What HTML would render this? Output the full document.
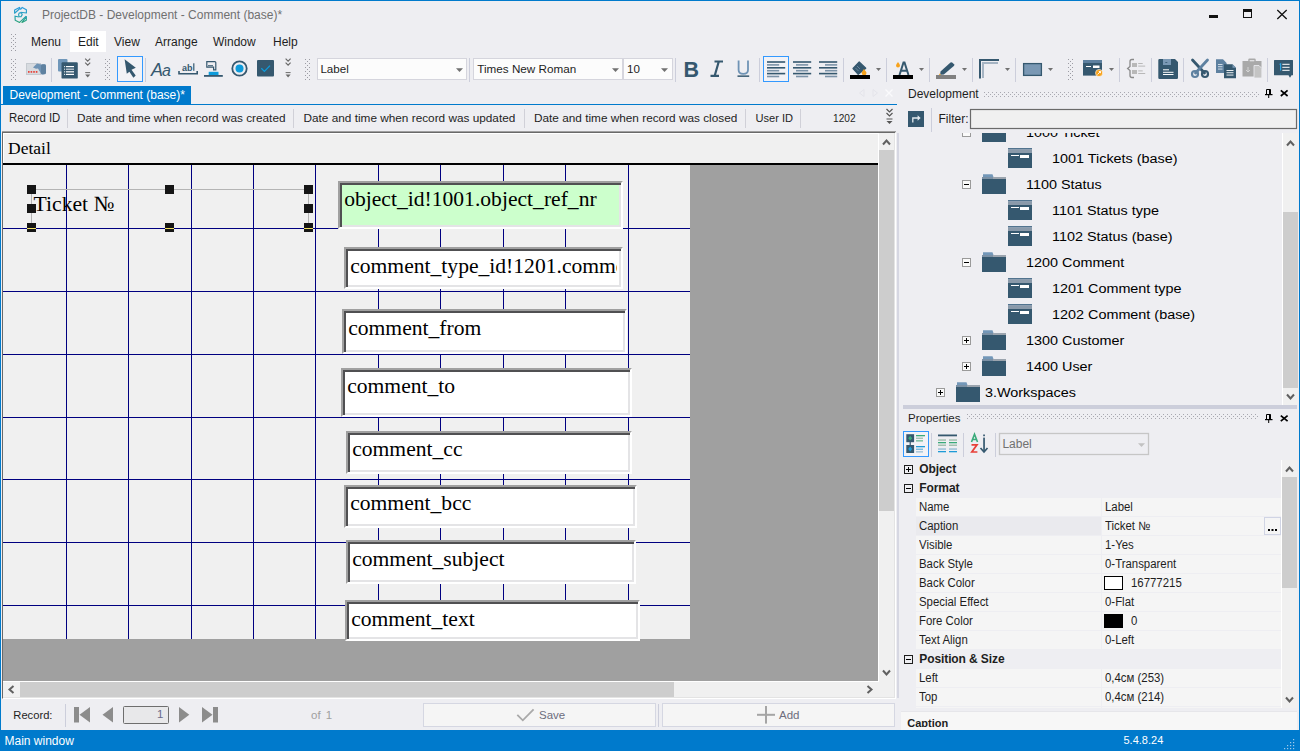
<!DOCTYPE html>
<html><head><meta charset="utf-8">
<style>
*{margin:0;padding:0;box-sizing:border-box}
html,body{width:1300px;height:751px;overflow:hidden;background:#EEEEF2;font-family:"Liberation Sans",sans-serif;font-size:12px;color:#1E1E1E}
.a{position:absolute}
.t{position:absolute;white-space:nowrap;line-height:1}
.s{font-family:"Liberation Serif",serif;color:#000}
.sep{position:absolute;width:1px;background:#CCCEDB}
.grip{position:absolute;width:6px;background-image:radial-gradient(circle at 1px 1px,#9A9AA2 0.8px,transparent 1px),radial-gradient(circle at 1px 1px,#9A9AA2 0.8px,transparent 1px);background-size:4px 4px,4px 4px;background-position:0 0,2px 2px}
.tb{position:absolute;background:#fff;border-style:solid;border-width:2px;border-color:#A0A0A0 #FFFFFF #FFFFFF #A0A0A0;box-shadow:inset 2px 2px 0 #505052,inset -2px -2px 0 #E4E4E6}
.tbt{position:absolute;font-family:"Liberation Serif",serif;font-size:21.6px;line-height:1;white-space:nowrap;color:#000;overflow:hidden}
.gl{position:absolute;background:#000080}
.h{position:absolute;width:9px;height:9px;background:#151515}
.row{position:absolute;left:916px;width:365px;height:18px;background:#F5F5F5}
.pl{position:absolute;left:919px;font-size:11px;line-height:1;white-space:nowrap;color:#1E1E1E}
.pv{position:absolute;left:1105px;font-size:11px;line-height:1;white-space:nowrap;color:#1E1E1E}
.tr{position:absolute;font-size:12.3px;line-height:1;white-space:nowrap;color:#000;transform:scaleX(1.17);transform-origin:0 0}
</style></head><body>

<!-- window border -->
<div class="a" style="left:0;top:0;width:1300px;height:1px;background:#007ACC"></div>
<div class="a" style="left:0;top:0;width:1px;height:751px;background:#007ACC"></div>
<div class="a" style="left:1299px;top:0;width:1px;height:751px;background:#007ACC"></div>

<!-- title bar -->
<svg class="a" style="left:0;top:0" width="40" height="30" viewBox="0 0 40 30">
<defs><linearGradient id="lg" x1="0" y1="7" x2="0" y2="23" gradientUnits="userSpaceOnUse"><stop offset="0" stop-color="#2A9BE0"/><stop offset="0.55" stop-color="#27A2B8"/><stop offset="1" stop-color="#2BA273"/></linearGradient></defs>
<g fill="none" stroke="url(#lg)" stroke-width="1.15" stroke-linejoin="round">
<path d="M14.6 10 L19.4 7.4 L20.2 8.3 L14.6 13.2 Z"/>
<path d="M20.4 9.6 L22.2 7.4 L26.4 9.8 V13 L20.6 12.2"/>
<path d="M19.2 13 L21.4 12.6 L22.2 14.6 L21 16.8 L19 16.6 L18.6 14.6 Z"/>
<path d="M14.4 16 L18.8 17 M15 16.4 L15.2 20.2 L19.6 22.4 L26.2 16.2"/>
<path d="M22 22.4 L26.4 16.6 L26.3 20.3 Z"/>
</g></svg>
<div class="t" style="left:42px;top:8.6px;color:#707070">ProjectDB - Development - Comment (base)*</div>
<div class="a" style="left:1209px;top:15px;width:9px;height:3px;background:#111"></div>
<div class="a" style="left:1243px;top:9px;width:9px;height:9px;border:1px solid #111;border-top-width:3px"></div>
<svg class="a" style="left:1276px;top:9px" width="12" height="11" viewBox="0 0 12 11"><path d="M1.3 1 L10.7 10 M10.7 1 L1.3 10" stroke="#111" stroke-width="1.3"/></svg>

<!-- menu bar -->
<div class="a" style="left:70px;top:31px;width:36px;height:21px;background:#fff"></div>
<div class="t" style="left:31px;top:36.2px">Menu</div>
<div class="t" style="left:78px;top:36.2px">Edit</div>
<div class="t" style="left:114px;top:36.2px">View</div>
<div class="t" style="left:155px;top:36.2px">Arrange</div>
<div class="t" style="left:213px;top:36.2px">Window</div>
<div class="t" style="left:273px;top:36.2px">Help</div>

<!-- TOOLBAR placeholder -->
<!--TB-->
<svg class="a" style="left:0;top:0" width="1300" height="86" viewBox="0 0 1300 86">
<g fill="#9C9CA4"><rect x="11" y="34" width="1" height="1"/><rect x="15" y="34" width="1" height="1"/><rect x="13" y="36" width="1" height="1"/><rect x="11" y="38" width="1" height="1"/><rect x="15" y="38" width="1" height="1"/><rect x="13" y="40" width="1" height="1"/><rect x="11" y="42" width="1" height="1"/><rect x="15" y="42" width="1" height="1"/><rect x="13" y="44" width="1" height="1"/><rect x="11" y="46" width="1" height="1"/><rect x="15" y="46" width="1" height="1"/><rect x="13" y="48" width="1" height="1"/><rect x="11" y="50" width="1" height="1"/><rect x="15" y="50" width="1" height="1"/></g>
<g fill="#9C9CA4"><rect x="11" y="59" width="1" height="1"/><rect x="15" y="59" width="1" height="1"/><rect x="13" y="61" width="1" height="1"/><rect x="11" y="63" width="1" height="1"/><rect x="15" y="63" width="1" height="1"/><rect x="13" y="65" width="1" height="1"/><rect x="11" y="67" width="1" height="1"/><rect x="15" y="67" width="1" height="1"/><rect x="13" y="69" width="1" height="1"/><rect x="11" y="71" width="1" height="1"/><rect x="15" y="71" width="1" height="1"/><rect x="13" y="73" width="1" height="1"/><rect x="11" y="75" width="1" height="1"/><rect x="15" y="75" width="1" height="1"/><rect x="13" y="77" width="1" height="1"/><rect x="11" y="79" width="1" height="1"/><rect x="15" y="79" width="1" height="1"/></g>
<g fill="#9C9CA4"><rect x="105" y="59" width="1" height="1"/><rect x="109" y="59" width="1" height="1"/><rect x="107" y="61" width="1" height="1"/><rect x="105" y="63" width="1" height="1"/><rect x="109" y="63" width="1" height="1"/><rect x="107" y="65" width="1" height="1"/><rect x="105" y="67" width="1" height="1"/><rect x="109" y="67" width="1" height="1"/><rect x="107" y="69" width="1" height="1"/><rect x="105" y="71" width="1" height="1"/><rect x="109" y="71" width="1" height="1"/><rect x="107" y="73" width="1" height="1"/><rect x="105" y="75" width="1" height="1"/><rect x="109" y="75" width="1" height="1"/><rect x="107" y="77" width="1" height="1"/><rect x="105" y="79" width="1" height="1"/><rect x="109" y="79" width="1" height="1"/></g>
<g fill="#9C9CA4"><rect x="305" y="59" width="1" height="1"/><rect x="309" y="59" width="1" height="1"/><rect x="307" y="61" width="1" height="1"/><rect x="305" y="63" width="1" height="1"/><rect x="309" y="63" width="1" height="1"/><rect x="307" y="65" width="1" height="1"/><rect x="305" y="67" width="1" height="1"/><rect x="309" y="67" width="1" height="1"/><rect x="307" y="69" width="1" height="1"/><rect x="305" y="71" width="1" height="1"/><rect x="309" y="71" width="1" height="1"/><rect x="307" y="73" width="1" height="1"/><rect x="305" y="75" width="1" height="1"/><rect x="309" y="75" width="1" height="1"/><rect x="307" y="77" width="1" height="1"/><rect x="305" y="79" width="1" height="1"/><rect x="309" y="79" width="1" height="1"/></g>
<g fill="#9C9CA4"><rect x="1068" y="59" width="1" height="1"/><rect x="1072" y="59" width="1" height="1"/><rect x="1070" y="61" width="1" height="1"/><rect x="1068" y="63" width="1" height="1"/><rect x="1072" y="63" width="1" height="1"/><rect x="1070" y="65" width="1" height="1"/><rect x="1068" y="67" width="1" height="1"/><rect x="1072" y="67" width="1" height="1"/><rect x="1070" y="69" width="1" height="1"/><rect x="1068" y="71" width="1" height="1"/><rect x="1072" y="71" width="1" height="1"/><rect x="1070" y="73" width="1" height="1"/><rect x="1068" y="75" width="1" height="1"/><rect x="1072" y="75" width="1" height="1"/><rect x="1070" y="77" width="1" height="1"/><rect x="1068" y="79" width="1" height="1"/><rect x="1072" y="79" width="1" height="1"/></g>
<rect x="26.5" y="63.5" width="14" height="11" fill="#D7DBE0" stroke="#C5CAD0" stroke-width="1"/>
<g fill="#E8453C"><rect x="28" y="71" width="1.6" height="1.8"/><rect x="30.6" y="71" width="1.6" height="1.8"/><rect x="33.2" y="71" width="1.6" height="1.8"/><rect x="35.8" y="71" width="1.6" height="1.8"/></g>
<path d="M33 67.5 L37 63.5 L41 64.5 L45.5 64.5 L45.5 72.5 Q45 74.5 43 74.5 L41.5 74.5 L38 68.5 L36 68.8 Z" fill="#6F93B5"/>
<rect x="41" y="64.2" width="5" height="10" rx="1.5" fill="#5E81A0"/>
<rect x="51" y="58" width="1" height="24" fill="#CCCEDB"/>
<rect x="58" y="59" width="9.5" height="12.5" rx="1" fill="#7097BA"/>
<rect x="61.5" y="62.3" width="16.3" height="16.3" rx="1.2" fill="#35586F"/>
<g fill="#fff"><rect x="66" y="66" width="8" height="1.2"/><rect x="66" y="68.6" width="8" height="1.2" fill="#C9D3DC"/><rect x="66" y="71.2" width="8" height="1.2"/><rect x="66" y="73.8" width="8" height="1.2"/><rect x="64.2" y="66" width="0.9" height="1.2"/><rect x="64.2" y="68.6" width="0.9" height="1.2"/><rect x="64.2" y="71.2" width="0.9" height="1.2"/><rect x="64.2" y="73.8" width="0.9" height="1.2"/></g>
<path d="M85.2 58.6 l2.5 2.5 l2.5 -2.5 M85.2 62.6 l2.5 2.5 l2.5 -2.5" fill="none" stroke="#6A6A6A" stroke-width="1.2"/><rect x="85.2" y="72.1" width="5" height="1" fill="#6A6A6A"/><path d="M85.2 74.6 h5 l-2.5 3 z" fill="#6A6A6A"/>
<rect x="117.5" y="56.5" width="25" height="25" fill="#F2F2F6" stroke="#3399FF" stroke-width="1"/>
<path d="M124.6 59.2 L135.8 67.8 L131.5 69.8 L135.7 75.4 L133.4 77.7 L129.4 71.8 L126.8 73.8 Z" fill="#35586F"/>
<rect x="145" y="58" width="1" height="24" fill="#CCCEDB"/>
<text x="151" y="75.5" font-family="Liberation Sans" font-style="italic" font-size="18" fill="#35586F">A</text>
<text x="162" y="75.5" font-family="Liberation Sans" font-style="italic" font-size="16" fill="#35586F" textLength="10">a</text>
<text x="182" y="70.5" font-family="Liberation Sans" font-weight="bold" font-size="9" fill="#35586F">ab</text>
<rect x="193.2" y="63.3" width="1.2" height="7.5" fill="#35586F"/>
<path d="M179 71 V73.8 H197.2 V71" fill="none" stroke="#35586F" stroke-width="1.6"/>
<path d="M206.8 61.6 H214.8 Q215.8 61.6 215.8 62.6 V69.8 H213.6 V67.2 H206.8 Z" fill="none" stroke="#35586F" stroke-width="1.2"/>
<rect x="208" y="65.2" width="5" height="1" fill="#35586F"/>
<rect x="208.7" y="71.8" width="9.8" height="3.4" fill="#0D9BDB"/>
<rect x="204" y="75" width="18.8" height="1.8" fill="#35586F"/>
<circle cx="239.5" cy="68.5" r="7.2" fill="none" stroke="#35586F" stroke-width="1.8"/><circle cx="239.5" cy="68.5" r="4" fill="#0D9BDB"/>
<rect x="257" y="60" width="17" height="16.6" rx="1" fill="#35586F"/><path d="M261.3 68.3 L264.4 71.4 L270 65.6" fill="none" stroke="#0D9BDB" stroke-width="1.3"/>
<path d="M285.6 58.6 l2.5 2.5 l2.5 -2.5 M285.6 62.6 l2.5 2.5 l2.5 -2.5" fill="none" stroke="#6A6A6A" stroke-width="1.2"/><rect x="285.6" y="72.1" width="5" height="1" fill="#6A6A6A"/><path d="M285.6 74.6 h5 l-2.5 3 z" fill="#6A6A6A"/>
<rect x="317.5" y="58.5" width="149" height="21" fill="#FCFCFC" stroke="#D5D5DD"/>
<path d="M456 68.2 h7 l-3.5 3.8 z" fill="#717171"/>
<rect x="469" y="58" width="1" height="24" fill="#CCCEDB"/>
<rect x="473.5" y="58.5" width="149" height="21" fill="#FCFCFC" stroke="#D5D5DD"/>
<path d="M612 68.2 h7 l-3.5 3.8 z" fill="#717171"/>
<rect x="623.5" y="58.5" width="49" height="21" fill="#FCFCFC" stroke="#D5D5DD"/>
<path d="M661 68.2 h7 l-3.5 3.8 z" fill="#717171"/>
<rect x="675" y="58" width="1" height="24" fill="#CCCEDB"/>
<text x="683.5" y="76.6" font-family="Liberation Sans" font-weight="bold" font-size="21.5" fill="#35586F">B</text>
<path d="M714.5 61.5 H723 M710.5 75.8 H719 M718.8 61.5 L714.7 75.8" fill="none" stroke="#35586F" stroke-width="2.2"/>
<path d="M738.6 60.5 V70 Q738.6 73.8 743.3 73.8 Q748 73.8 748 70 V60.5" fill="none" stroke="#6F93B5" stroke-width="1.8"/><rect x="737.5" y="75.4" width="11.7" height="1.5" fill="#35586F"/>
<rect x="759" y="58" width="1" height="24" fill="#CCCEDB"/>
<rect x="763.5" y="56.5" width="25" height="25" fill="#F2F2F6" stroke="#3399FF"/>
<rect x="767" y="61.2" width="18.2" height="1.6" fill="#35586F"/><rect x="767" y="64.1" width="12.2" height="1.6" fill="#7C93A8"/><rect x="767" y="67.0" width="18.2" height="1.6" fill="#35586F"/><rect x="767" y="69.9" width="12.2" height="1.6" fill="#7C93A8"/><rect x="767" y="72.8" width="18.2" height="1.6" fill="#35586F"/><rect x="767" y="75.7" width="12.2" height="1.6" fill="#7C93A8"/>
<rect x="793.0" y="61.2" width="18.2" height="1.6" fill="#35586F"/><rect x="796.0" y="64.1" width="12.2" height="1.6" fill="#7C93A8"/><rect x="793.0" y="67.0" width="18.2" height="1.6" fill="#35586F"/><rect x="796.0" y="69.9" width="12.2" height="1.6" fill="#7C93A8"/><rect x="793.0" y="72.8" width="18.2" height="1.6" fill="#35586F"/><rect x="796.0" y="75.7" width="12.2" height="1.6" fill="#7C93A8"/>
<rect x="819.0" y="61.2" width="18.2" height="1.6" fill="#35586F"/><rect x="825.0" y="64.1" width="12.2" height="1.6" fill="#7C93A8"/><rect x="819.0" y="67.0" width="18.2" height="1.6" fill="#35586F"/><rect x="825.0" y="69.9" width="12.2" height="1.6" fill="#7C93A8"/><rect x="819.0" y="72.8" width="18.2" height="1.6" fill="#35586F"/><rect x="825.0" y="75.7" width="12.2" height="1.6" fill="#7C93A8"/>
<rect x="843" y="58" width="1" height="24" fill="#CCCEDB"/>
<path d="M859.2 62 L865.8 68.2 L858.2 74.4 L853 68.5 Z" fill="#35586F" stroke="#35586F" stroke-width="1.2" stroke-linejoin="round"/>
<path d="M857 66 l3 3 M855.5 68 l3 3" stroke="#7C98B0" stroke-width="0.7"/>
<path d="M864 69 Q866.5 72 866.5 73 A2.3 2.3 0 0 1 861.7 73 Q861.7 72 864 69 Z" fill="#F7A21B"/>
<rect x="850" y="75" width="20" height="4" fill="#000"/>
<path d="M876 68 h5 l-2.5 3 z" fill="#717171"/>
<rect x="886" y="58" width="1" height="24" fill="#CCCEDB"/>
<path d="M899.5 75 L903.5 62.5 H904.5 L908.5 75 M901 70.8 H907" fill="none" stroke="#35586F" stroke-width="2"/>
<path d="M898 62 Q900 64.5 900 65.5 A2 2 0 0 1 896 65.5 Q896 64.5 898 62 Z" fill="#F7A21B"/>
<rect x="893" y="75" width="20" height="4" fill="#000"/>
<path d="M919 68 h5 l-2.5 3 z" fill="#717171"/>
<rect x="929" y="58" width="1" height="24" fill="#CCCEDB"/>
<path d="M940.5 71.5 L950.5 62.5 Q951.5 61.8 952.5 62.8 L954 64.3 Q954.7 65.2 953.8 66 L943.8 74.5 L940.2 74.7 Z" fill="#35586F"/>
<path d="M939.5 73.5 l1.5 1.2 l-2 0.5 z" fill="#F7A21B"/>
<rect x="936" y="75" width="20" height="4" fill="#808080"/>
<path d="M962 68 h5 l-2.5 3 z" fill="#717171"/>
<rect x="972" y="58" width="1" height="24" fill="#CCCEDB"/>
<path d="M980 78.5 V60 H999" fill="none" stroke="#35586F" stroke-width="2"/>
<path d="M983 78 V63 H998" fill="none" stroke="#A5B4C3" stroke-width="2"/>
<path d="M1005 68 h5 l-2.5 3 z" fill="#717171"/>
<rect x="1015" y="58" width="1" height="24" fill="#CCCEDB"/>
<rect x="1023.6" y="63.6" width="17.8" height="11.8" fill="#7A98B4" stroke="#35586F" stroke-width="1.3"/>
<path d="M1048 68 h5 l-2.5 3 z" fill="#717171"/>
<rect x="1083" y="60" width="19" height="3" fill="#5E81A0"/><rect x="1083" y="63" width="19" height="12.6" fill="#35586F"/>
<rect x="1086" y="66" width="5" height="1" fill="#fff"/><rect x="1093" y="65.5" width="6.5" height="2.5" fill="#fff"/>
<circle cx="1099.1" cy="73" r="3.6" fill="#F7A21B" stroke="#fff" stroke-width="0.6"/><path d="M1097.5 74.5 L1100.5 71.5 M1098.8 71.5 H1100.5 V73.2" stroke="#fff" stroke-width="0.9" fill="none"/>
<path d="M1109 68 h5 l-2.5 3 z" fill="#717171"/>
<rect x="1119" y="58" width="1" height="24" fill="#CCCEDB"/>
<path d="M1134 59.5 H1132 Q1130 59.5 1130 61.5 V66.5 L1127.6 68.5 L1130 70.5 V75.5 Q1130 77.5 1132 77.5 H1134" fill="none" stroke="#8A8A8A" stroke-width="1.3"/>
<g fill="#B8B8B8"><rect x="1132" y="63" width="5" height="4"/><rect x="1132" y="70" width="5" height="4"/><rect x="1138.2" y="63" width="4.5" height="1"/><rect x="1138.2" y="65.6" width="7" height="1"/><rect x="1138.2" y="70.4" width="4.5" height="1"/><rect x="1138.2" y="73" width="7" height="1"/></g>
<rect x="1151" y="58" width="1" height="24" fill="#CCCEDB"/>
<path d="M1159.3 59 H1175 L1178 62 V77.8 Q1178 79 1176.8 79 H1159.5 Q1158.3 79 1158.3 77.8 V60.2 Q1158.3 59 1159.5 59 Z" fill="#35586F"/>
<rect x="1163" y="59" width="8" height="6" fill="#7A98B4"/><rect x="1165.3" y="62" width="2" height="0.8" fill="#35586F"/>
<g fill="#fff"><rect x="1163" y="69.3" width="6" height="1"/><rect x="1163" y="71.8" width="10.5" height="1"/><rect x="1163" y="74" width="10.5" height="1"/></g>
<rect x="1183" y="58" width="1" height="24" fill="#CCCEDB"/>
<path d="M1192.5 60 L1204.5 73" stroke="#35586F" stroke-width="2.8" stroke-linecap="round"/>
<path d="M1207.5 60 L1195.5 73" stroke="#5E81A0" stroke-width="2.8" stroke-linecap="round"/>
<circle cx="1195" cy="74" r="3" fill="none" stroke="#5E81A0" stroke-width="2.2"/><circle cx="1205" cy="74" r="3" fill="none" stroke="#35586F" stroke-width="2.2"/>
<path d="M1216 59.3 H1223 L1226.6 63 V73 H1216 Z" fill="#5E81A0"/>
<g fill="#DDE5EC"><rect x="1218" y="64" width="4.5" height="0.9"/><rect x="1218" y="66.3" width="4.5" height="0.9"/><rect x="1218" y="68.6" width="4.5" height="0.9"/></g>
<path d="M1224 64.2 H1232.5 L1236 67.8 V78.3 H1224 Z" fill="#35586F"/><path d="M1232.5 64.2 V67.8 H1236 Z" fill="#7A98B4"/>
<g fill="#fff"><rect x="1226.5" y="70" width="7" height="0.9"/><rect x="1226.5" y="72.3" width="7" height="0.9"/><rect x="1226.5" y="74.6" width="7" height="0.9"/></g>
<path d="M1242.5 61 H1261.5 V76.5 H1242.5 Z" fill="#A9A9A9"/><path d="M1249 61 V59.8 Q1249 59.2 1249.6 59.2 H1254.4 Q1255 59.2 1255 59.8 V61" fill="none" stroke="#A9A9A9" stroke-width="1.5"/><rect x="1249.8" y="60.5" width="4.4" height="1" fill="#D0D0D0"/>
<path d="M1254 65.5 H1259 L1261.8 68.3 V78 H1254 Z" fill="#C4C4C4" stroke="#EEEEF2" stroke-width="0.8"/>
<path d="M1248 67 V72 M1246 70 L1248 72 L1250 70" fill="none" stroke="#D8D8D8" stroke-width="0.9"/>
<rect x="1267" y="58" width="1" height="24" fill="#CCCEDB"/>
<path d="M1274.6 60 H1292.5 Q1293 60 1293 60.6 V74.8 Q1293 75.3 1292.5 75.3 H1291.5 L1290 77.7 L1288.5 75.3 H1274.6 Q1274 75.3 1274 74.8 V60.6 Q1274 60 1274.6 60 Z" fill="#35586F"/>
<path d="M1279.6 64.5 L1280.6 63.8 V70.5" stroke="#2AA7E8" stroke-width="1.2" fill="none"/>
<g fill="#fff"><rect x="1282.3" y="63.8" width="7.3" height="1"/><rect x="1282.3" y="66.8" width="7.3" height="1"/><rect x="1282.3" y="69.8" width="7.3" height="1"/></g>
</svg>
<div class="t" style="left:320.4px;top:63.2px;font-size:11.6px">Label</div>
<div class="t" style="left:477.3px;top:62.8px;font-size:11.7px">Times New Roman</div>
<div class="t" style="left:627px;top:63.2px;font-size:11.6px">10</div>
<!--/TB-->

<!-- doc tab -->
<div class="a" style="left:3px;top:86px;width:188px;height:19px;background:#007ACC"></div>
<div class="t" style="left:9.5px;top:89.4px;color:#fff">Development - Comment (base)*</div>
<div class="a" style="left:1px;top:104px;width:896px;height:1px;background:#007ACC"></div>
<svg class="a" style="left:858px;top:89px" width="36" height="9" viewBox="0 0 36 9"><path d="M6 0.5 L1.5 4 L6 7.5 Z M15 0.5 L19.5 4 L15 7.5 Z" fill="none" stroke="#E4E4EA" stroke-width="1"/><path d="M27.5 0.5 L34.5 7.5 M34.5 0.5 L27.5 7.5" stroke="#FAFAFC" stroke-width="1.3"/></svg>

<!-- record header row -->

<div class="t" style="left:8.5px;top:112.05px;font-size:12px;transform:scaleX(0.95);transform-origin:0 0">Record ID</div>
<div class="sep" style="left:67px;top:109px;height:19px;background:#D0D0D8"></div>
<div class="t" style="left:77px;top:112.6px;font-size:11.8px">Date and time when record was created</div>
<div class="sep" style="left:293px;top:109px;height:19px;background:#D0D0D8"></div>
<div class="t" style="left:303.5px;top:112.6px;font-size:11.8px">Date and time when record was updated</div>
<div class="sep" style="left:524px;top:109px;height:19px;background:#D0D0D8"></div>
<div class="t" style="left:534px;top:112.6px;font-size:11.8px">Date and time when record was closed</div>
<div class="sep" style="left:745px;top:109px;height:19px;background:#D0D0D8"></div>
<div class="t" style="left:755.5px;top:112.6px;font-size:11.1px">User ID</div>
<div class="sep" style="left:800px;top:109px;height:19px;background:#D0D0D8"></div>
<div class="t" style="left:832.5px;top:113px;font-size:11px;transform:scaleX(0.92);transform-origin:0 0">1202</div>
<svg class="a" style="left:886px;top:108px" width="7" height="17" viewBox="0 0 7 17"><path d="M0.5 1 L3.5 4 L6.5 1 M0.5 5 L3.5 8 L6.5 5" fill="none" stroke="#555" stroke-width="1.2"/><path d="M0.5 11 H6.5" stroke="#555" stroke-width="1"/><path d="M0.5 13 H6.5 L3.5 16 Z" fill="#555"/></svg>

<!-- DESIGN placeholder -->
<div class="a" style="left:2px;top:131px;width:894px;height:568px;background:#F0F0F0;border-style:solid;border-width:2px 1px 1px 1px;border-color:#696969 #fff #fff #696969"></div>
<div class="a" style="left:2px;top:131px;width:894px;height:1px;background:#A0A0A0"></div>
<div class="a" style="left:894px;top:133px;width:1px;height:565px;background:#E3E3E3"></div>
<div class="a" style="left:3px;top:697px;width:892px;height:1px;background:#E3E3E3"></div>
<div class="a" style="left:3px;top:133px;width:875px;height:1px;background:#fff"></div>
<div class="a" style="left:3px;top:133px;width:1px;height:30px;background:#fff"></div>
<div class="t s" style="left:8px;top:140px;font-size:17.5px">Detail</div>
<div class="a" style="left:3px;top:163px;width:875px;height:2px;background:#000"></div>
<div class="a" style="left:3px;top:165px;width:875px;height:516px;background:#A0A0A0"></div>
<div class="a" style="left:3px;top:165px;width:687px;height:474px;background:#F0F0F0"></div>
<div class="a" style="left:878px;top:133px;width:1px;height:549px;background:#fff"></div>
<div class="a" style="left:3px;top:681px;width:876px;height:1px;background:#fff"></div>
<div class="gl" style="left:66px;top:165px;width:1px;height:474px"></div>
<div class="gl" style="left:128px;top:165px;width:1px;height:474px"></div>
<div class="gl" style="left:191px;top:165px;width:1px;height:474px"></div>
<div class="gl" style="left:253px;top:165px;width:1px;height:474px"></div>
<div class="gl" style="left:315px;top:165px;width:1px;height:474px"></div>
<div class="gl" style="left:378px;top:165px;width:1px;height:474px"></div>
<div class="gl" style="left:440px;top:165px;width:1px;height:474px"></div>
<div class="gl" style="left:503px;top:165px;width:1px;height:474px"></div>
<div class="gl" style="left:565px;top:165px;width:1px;height:474px"></div>
<div class="gl" style="left:628px;top:165px;width:1px;height:474px"></div>
<div class="gl" style="left:3px;top:228px;width:687px;height:1px"></div>
<div class="gl" style="left:3px;top:291px;width:687px;height:1px"></div>
<div class="gl" style="left:3px;top:354px;width:687px;height:1px"></div>
<div class="gl" style="left:3px;top:417px;width:687px;height:1px"></div>
<div class="gl" style="left:3px;top:479px;width:687px;height:1px"></div>
<div class="gl" style="left:3px;top:542px;width:687px;height:1px"></div>
<div class="gl" style="left:3px;top:605px;width:687px;height:1px"></div>
<div class="a" style="left:31px;top:189px;width:278px;height:40px;border:1px solid #B4B4B4;border-bottom:none"></div>
<div class="t s" style="left:33.5px;top:193.6px;font-size:21.7px">Ticket №</div>
<div class="h" style="left:27px;top:185px"></div>
<div class="h" style="left:27px;top:223px"></div>
<div class="h" style="left:165px;top:185px"></div>
<div class="h" style="left:165px;top:223px"></div>
<div class="h" style="left:304px;top:185px"></div>
<div class="h" style="left:304px;top:223px"></div>
<div class="h" style="left:27px;top:204px"></div>
<div class="h" style="left:304px;top:204px"></div>
<div class="a" style="left:27px;top:228px;width:9px;height:1px;background:#F0E060"></div>
<div class="a" style="left:165px;top:228px;width:9px;height:1px;background:#F0E060"></div>
<div class="a" style="left:304px;top:228px;width:9px;height:1px;background:#F0E060"></div>
<div class="tb" style="left:338px;top:181px;width:285px;height:48px;background:#CCFFCC"></div>
<div class="tbt" style="left:344.2px;top:188.5px;width:272.8px;height:26px">object_id!1001.object_ref_nr</div>
<div class="tb" style="left:344px;top:247px;width:279px;height:42px;background:#fff"></div>
<div class="tbt" style="left:350.2px;top:255.9px;width:266.8px;height:26px">comment_type_id!1201.comment_type_name</div>
<div class="tb" style="left:342px;top:309px;width:285px;height:45px;background:#fff"></div>
<div class="tbt" style="left:348.2px;top:317.5px;width:272.8px;height:26px">comment_from</div>
<div class="tb" style="left:341px;top:368px;width:291px;height:49px;background:#fff"></div>
<div class="tbt" style="left:347.2px;top:376.0px;width:278.8px;height:26px">comment_to</div>
<div class="tb" style="left:346px;top:431px;width:286px;height:43px;background:#fff"></div>
<div class="tbt" style="left:352.2px;top:439.0px;width:273.8px;height:26px">comment_cc</div>
<div class="tb" style="left:344px;top:485px;width:293px;height:43px;background:#fff"></div>
<div class="tbt" style="left:350.2px;top:493.0px;width:280.8px;height:26px">comment_bcc</div>
<div class="tb" style="left:346px;top:540px;width:290px;height:44px;background:#fff"></div>
<div class="tbt" style="left:352.2px;top:548.5px;width:277.8px;height:26px">comment_subject</div>
<div class="tb" style="left:345px;top:600px;width:295px;height:41px;background:#fff"></div>
<div class="tbt" style="left:351.2px;top:608.5px;width:282.8px;height:26px">comment_text</div>
<div class="a" style="left:879px;top:150px;width:15px;height:361px;background:#CDCDCD"></div>
<svg class="a" style="left:882px;top:138px" width="9" height="8" viewBox="0 0 9 8"><path d="M1 6.5 L4.5 2.5 L8 6.5" fill="none" stroke="#606060" stroke-width="2"/></svg>
<svg class="a" style="left:882px;top:669px" width="9" height="8" viewBox="0 0 9 8"><path d="M1 1.5 L4.5 5.5 L8 1.5" fill="none" stroke="#606060" stroke-width="2"/></svg>
<div class="a" style="left:20px;top:682px;width:654px;height:15px;background:#CDCDCD"></div>
<svg class="a" style="left:7px;top:685px" width="8" height="9" viewBox="0 0 8 9"><path d="M6.5 1 L2.5 4.5 L6.5 8" fill="none" stroke="#606060" stroke-width="2"/></svg>
<svg class="a" style="left:866px;top:685px" width="8" height="9" viewBox="0 0 8 9"><path d="M1.5 1 L5.5 4.5 L1.5 8" fill="none" stroke="#606060" stroke-width="2"/></svg>

<!--RP-->
<div class="a" style="left:897px;top:133px;width:2px;height:565px;background:#D6D7E2"></div>
<div class="t" style="left:908px;top:87.6px">Development</div>
<svg class="a" style="left:0;top:0" width="1300" height="751" viewBox="0 0 1300 751">
<g fill="#A8A8B0"><rect x="984" y="92" width="1" height="1"/><rect x="984" y="96" width="1" height="1"/><rect x="986" y="94" width="1" height="1"/><rect x="988" y="92" width="1" height="1"/><rect x="988" y="96" width="1" height="1"/><rect x="990" y="94" width="1" height="1"/><rect x="992" y="92" width="1" height="1"/><rect x="992" y="96" width="1" height="1"/><rect x="994" y="94" width="1" height="1"/><rect x="996" y="92" width="1" height="1"/><rect x="996" y="96" width="1" height="1"/><rect x="998" y="94" width="1" height="1"/><rect x="1000" y="92" width="1" height="1"/><rect x="1000" y="96" width="1" height="1"/><rect x="1002" y="94" width="1" height="1"/><rect x="1004" y="92" width="1" height="1"/><rect x="1004" y="96" width="1" height="1"/><rect x="1006" y="94" width="1" height="1"/><rect x="1008" y="92" width="1" height="1"/><rect x="1008" y="96" width="1" height="1"/><rect x="1010" y="94" width="1" height="1"/><rect x="1012" y="92" width="1" height="1"/><rect x="1012" y="96" width="1" height="1"/><rect x="1014" y="94" width="1" height="1"/><rect x="1016" y="92" width="1" height="1"/><rect x="1016" y="96" width="1" height="1"/><rect x="1018" y="94" width="1" height="1"/><rect x="1020" y="92" width="1" height="1"/><rect x="1020" y="96" width="1" height="1"/><rect x="1022" y="94" width="1" height="1"/><rect x="1024" y="92" width="1" height="1"/><rect x="1024" y="96" width="1" height="1"/><rect x="1026" y="94" width="1" height="1"/><rect x="1028" y="92" width="1" height="1"/><rect x="1028" y="96" width="1" height="1"/><rect x="1030" y="94" width="1" height="1"/><rect x="1032" y="92" width="1" height="1"/><rect x="1032" y="96" width="1" height="1"/><rect x="1034" y="94" width="1" height="1"/><rect x="1036" y="92" width="1" height="1"/><rect x="1036" y="96" width="1" height="1"/><rect x="1038" y="94" width="1" height="1"/><rect x="1040" y="92" width="1" height="1"/><rect x="1040" y="96" width="1" height="1"/><rect x="1042" y="94" width="1" height="1"/><rect x="1044" y="92" width="1" height="1"/><rect x="1044" y="96" width="1" height="1"/><rect x="1046" y="94" width="1" height="1"/><rect x="1048" y="92" width="1" height="1"/><rect x="1048" y="96" width="1" height="1"/><rect x="1050" y="94" width="1" height="1"/><rect x="1052" y="92" width="1" height="1"/><rect x="1052" y="96" width="1" height="1"/><rect x="1054" y="94" width="1" height="1"/><rect x="1056" y="92" width="1" height="1"/><rect x="1056" y="96" width="1" height="1"/><rect x="1058" y="94" width="1" height="1"/><rect x="1060" y="92" width="1" height="1"/><rect x="1060" y="96" width="1" height="1"/><rect x="1062" y="94" width="1" height="1"/><rect x="1064" y="92" width="1" height="1"/><rect x="1064" y="96" width="1" height="1"/><rect x="1066" y="94" width="1" height="1"/><rect x="1068" y="92" width="1" height="1"/><rect x="1068" y="96" width="1" height="1"/><rect x="1070" y="94" width="1" height="1"/><rect x="1072" y="92" width="1" height="1"/><rect x="1072" y="96" width="1" height="1"/><rect x="1074" y="94" width="1" height="1"/><rect x="1076" y="92" width="1" height="1"/><rect x="1076" y="96" width="1" height="1"/><rect x="1078" y="94" width="1" height="1"/><rect x="1080" y="92" width="1" height="1"/><rect x="1080" y="96" width="1" height="1"/><rect x="1082" y="94" width="1" height="1"/><rect x="1084" y="92" width="1" height="1"/><rect x="1084" y="96" width="1" height="1"/><rect x="1086" y="94" width="1" height="1"/><rect x="1088" y="92" width="1" height="1"/><rect x="1088" y="96" width="1" height="1"/><rect x="1090" y="94" width="1" height="1"/><rect x="1092" y="92" width="1" height="1"/><rect x="1092" y="96" width="1" height="1"/><rect x="1094" y="94" width="1" height="1"/><rect x="1096" y="92" width="1" height="1"/><rect x="1096" y="96" width="1" height="1"/><rect x="1098" y="94" width="1" height="1"/><rect x="1100" y="92" width="1" height="1"/><rect x="1100" y="96" width="1" height="1"/><rect x="1102" y="94" width="1" height="1"/><rect x="1104" y="92" width="1" height="1"/><rect x="1104" y="96" width="1" height="1"/><rect x="1106" y="94" width="1" height="1"/><rect x="1108" y="92" width="1" height="1"/><rect x="1108" y="96" width="1" height="1"/><rect x="1110" y="94" width="1" height="1"/><rect x="1112" y="92" width="1" height="1"/><rect x="1112" y="96" width="1" height="1"/><rect x="1114" y="94" width="1" height="1"/><rect x="1116" y="92" width="1" height="1"/><rect x="1116" y="96" width="1" height="1"/><rect x="1118" y="94" width="1" height="1"/><rect x="1120" y="92" width="1" height="1"/><rect x="1120" y="96" width="1" height="1"/><rect x="1122" y="94" width="1" height="1"/><rect x="1124" y="92" width="1" height="1"/><rect x="1124" y="96" width="1" height="1"/><rect x="1126" y="94" width="1" height="1"/><rect x="1128" y="92" width="1" height="1"/><rect x="1128" y="96" width="1" height="1"/><rect x="1130" y="94" width="1" height="1"/><rect x="1132" y="92" width="1" height="1"/><rect x="1132" y="96" width="1" height="1"/><rect x="1134" y="94" width="1" height="1"/><rect x="1136" y="92" width="1" height="1"/><rect x="1136" y="96" width="1" height="1"/><rect x="1138" y="94" width="1" height="1"/><rect x="1140" y="92" width="1" height="1"/><rect x="1140" y="96" width="1" height="1"/><rect x="1142" y="94" width="1" height="1"/><rect x="1144" y="92" width="1" height="1"/><rect x="1144" y="96" width="1" height="1"/><rect x="1146" y="94" width="1" height="1"/><rect x="1148" y="92" width="1" height="1"/><rect x="1148" y="96" width="1" height="1"/><rect x="1150" y="94" width="1" height="1"/><rect x="1152" y="92" width="1" height="1"/><rect x="1152" y="96" width="1" height="1"/><rect x="1154" y="94" width="1" height="1"/><rect x="1156" y="92" width="1" height="1"/><rect x="1156" y="96" width="1" height="1"/><rect x="1158" y="94" width="1" height="1"/><rect x="1160" y="92" width="1" height="1"/><rect x="1160" y="96" width="1" height="1"/><rect x="1162" y="94" width="1" height="1"/><rect x="1164" y="92" width="1" height="1"/><rect x="1164" y="96" width="1" height="1"/><rect x="1166" y="94" width="1" height="1"/><rect x="1168" y="92" width="1" height="1"/><rect x="1168" y="96" width="1" height="1"/><rect x="1170" y="94" width="1" height="1"/><rect x="1172" y="92" width="1" height="1"/><rect x="1172" y="96" width="1" height="1"/><rect x="1174" y="94" width="1" height="1"/><rect x="1176" y="92" width="1" height="1"/><rect x="1176" y="96" width="1" height="1"/><rect x="1178" y="94" width="1" height="1"/><rect x="1180" y="92" width="1" height="1"/><rect x="1180" y="96" width="1" height="1"/><rect x="1182" y="94" width="1" height="1"/><rect x="1184" y="92" width="1" height="1"/><rect x="1184" y="96" width="1" height="1"/><rect x="1186" y="94" width="1" height="1"/><rect x="1188" y="92" width="1" height="1"/><rect x="1188" y="96" width="1" height="1"/><rect x="1190" y="94" width="1" height="1"/><rect x="1192" y="92" width="1" height="1"/><rect x="1192" y="96" width="1" height="1"/><rect x="1194" y="94" width="1" height="1"/><rect x="1196" y="92" width="1" height="1"/><rect x="1196" y="96" width="1" height="1"/><rect x="1198" y="94" width="1" height="1"/><rect x="1200" y="92" width="1" height="1"/><rect x="1200" y="96" width="1" height="1"/><rect x="1202" y="94" width="1" height="1"/><rect x="1204" y="92" width="1" height="1"/><rect x="1204" y="96" width="1" height="1"/><rect x="1206" y="94" width="1" height="1"/><rect x="1208" y="92" width="1" height="1"/><rect x="1208" y="96" width="1" height="1"/><rect x="1210" y="94" width="1" height="1"/><rect x="1212" y="92" width="1" height="1"/><rect x="1212" y="96" width="1" height="1"/><rect x="1214" y="94" width="1" height="1"/><rect x="1216" y="92" width="1" height="1"/><rect x="1216" y="96" width="1" height="1"/><rect x="1218" y="94" width="1" height="1"/><rect x="1220" y="92" width="1" height="1"/><rect x="1220" y="96" width="1" height="1"/><rect x="1222" y="94" width="1" height="1"/><rect x="1224" y="92" width="1" height="1"/><rect x="1224" y="96" width="1" height="1"/><rect x="1226" y="94" width="1" height="1"/><rect x="1228" y="92" width="1" height="1"/><rect x="1228" y="96" width="1" height="1"/><rect x="1230" y="94" width="1" height="1"/><rect x="1232" y="92" width="1" height="1"/><rect x="1232" y="96" width="1" height="1"/><rect x="1234" y="94" width="1" height="1"/><rect x="1236" y="92" width="1" height="1"/><rect x="1236" y="96" width="1" height="1"/><rect x="1238" y="94" width="1" height="1"/><rect x="1240" y="92" width="1" height="1"/><rect x="1240" y="96" width="1" height="1"/><rect x="1242" y="94" width="1" height="1"/><rect x="1244" y="92" width="1" height="1"/><rect x="1244" y="96" width="1" height="1"/><rect x="1246" y="94" width="1" height="1"/><rect x="1248" y="92" width="1" height="1"/><rect x="1248" y="96" width="1" height="1"/><rect x="1250" y="94" width="1" height="1"/><rect x="1252" y="92" width="1" height="1"/><rect x="1252" y="96" width="1" height="1"/><rect x="1254" y="94" width="1" height="1"/><rect x="1256" y="92" width="1" height="1"/><rect x="1256" y="96" width="1" height="1"/><rect x="1258" y="94" width="1" height="1"/></g>
<path d="M1266.5 89.5 H1270.5 V94.5 H1266.5 Z" fill="none" stroke="#000" stroke-width="1"/><rect x="1269" y="89.5" width="1.6" height="5" fill="#000"/><rect x="1265" y="94" width="7.5" height="1.2" fill="#000"/><rect x="1268.2" y="95" width="1" height="3" fill="#000"/>
<path d="M1280.8 90.39999999999999 L1287.6 96.0 M1287.6 90.39999999999999 L1280.8 96.0" stroke="#000" stroke-width="1.7"/>
<rect x="908" y="111" width="16" height="16" fill="#35586F"/>
<path d="M912.8 122.5 V118 H918" fill="none" stroke="#E4EAEF" stroke-width="1.3"/><path d="M917.6 115.2 L920.6 118 L917.6 120.8 Z" fill="#E4EAEF"/>
<rect x="931" y="108" width="1" height="24" fill="#CCCEDB"/>
<rect x="970.5" y="109.5" width="326" height="19" fill="#F0F0F0" stroke="#6A6A6A" stroke-width="1.2"/>
</svg>
<div class="t" style="left:938.5px;top:112.5px">Filter:</div>
<div class="a" style="left:899px;top:133px;width:383px;height:272px;overflow:hidden">
<svg class="a" style="left:-899px;top:-133px" width="1300" height="420" viewBox="0 0 1300 420">
<rect x="962.5" y="128.5" width="8" height="8" fill="#FAFAFA" stroke="#9A9A9A" stroke-width="1"/><rect x="964" y="132" width="5" height="1" fill="#000"/>
<path d="M983 122.3 H992.5 L993.5 125 H983 Z" fill="#7397B8"/><rect x="982" y="125" width="11" height="2" fill="#7A90A5"/><rect x="993" y="125" width="13" height="2" fill="#9BA4AE"/><rect x="982" y="127" width="24" height="15" fill="#35586F"/>
<rect x="1008" y="148" width="24" height="1.6" fill="#52748F"/><rect x="1008" y="149.6" width="24" height="3.4" fill="#8A9AAA"/><rect x="1008" y="153" width="24" height="15" fill="#35586F"/><rect x="1011" y="155" width="8" height="1" fill="#fff"/><rect x="1020" y="155" width="9" height="3" fill="#fff"/>
<rect x="962.5" y="180.5" width="8" height="8" fill="#FAFAFA" stroke="#9A9A9A" stroke-width="1"/><rect x="964" y="184" width="5" height="1" fill="#000"/>
<path d="M983 174.3 H992.5 L993.5 177 H983 Z" fill="#7397B8"/><rect x="982" y="177" width="11" height="2" fill="#7A90A5"/><rect x="993" y="177" width="13" height="2" fill="#9BA4AE"/><rect x="982" y="179" width="24" height="15" fill="#35586F"/>
<rect x="1008" y="200" width="24" height="1.6" fill="#52748F"/><rect x="1008" y="201.6" width="24" height="3.4" fill="#8A9AAA"/><rect x="1008" y="205" width="24" height="15" fill="#35586F"/><rect x="1011" y="207" width="8" height="1" fill="#fff"/><rect x="1020" y="207" width="9" height="3" fill="#fff"/>
<rect x="1008" y="226" width="24" height="1.6" fill="#52748F"/><rect x="1008" y="227.6" width="24" height="3.4" fill="#8A9AAA"/><rect x="1008" y="231" width="24" height="15" fill="#35586F"/><rect x="1011" y="233" width="8" height="1" fill="#fff"/><rect x="1020" y="233" width="9" height="3" fill="#fff"/>
<rect x="962.5" y="258.5" width="8" height="8" fill="#FAFAFA" stroke="#9A9A9A" stroke-width="1"/><rect x="964" y="262" width="5" height="1" fill="#000"/>
<path d="M983 252.3 H992.5 L993.5 255 H983 Z" fill="#7397B8"/><rect x="982" y="255" width="11" height="2" fill="#7A90A5"/><rect x="993" y="255" width="13" height="2" fill="#9BA4AE"/><rect x="982" y="257" width="24" height="15" fill="#35586F"/>
<rect x="1008" y="278" width="24" height="1.6" fill="#52748F"/><rect x="1008" y="279.6" width="24" height="3.4" fill="#8A9AAA"/><rect x="1008" y="283" width="24" height="15" fill="#35586F"/><rect x="1011" y="285" width="8" height="1" fill="#fff"/><rect x="1020" y="285" width="9" height="3" fill="#fff"/>
<rect x="1008" y="304" width="24" height="1.6" fill="#52748F"/><rect x="1008" y="305.6" width="24" height="3.4" fill="#8A9AAA"/><rect x="1008" y="309" width="24" height="15" fill="#35586F"/><rect x="1011" y="311" width="8" height="1" fill="#fff"/><rect x="1020" y="311" width="9" height="3" fill="#fff"/>
<rect x="962.5" y="336.5" width="8" height="8" fill="#FAFAFA" stroke="#9A9A9A" stroke-width="1"/><rect x="964" y="340" width="5" height="1" fill="#000"/><rect x="966" y="338" width="1" height="5" fill="#000"/>
<path d="M983 330.3 H992.5 L993.5 333 H983 Z" fill="#7397B8"/><rect x="982" y="333" width="11" height="2" fill="#7A90A5"/><rect x="993" y="333" width="13" height="2" fill="#9BA4AE"/><rect x="982" y="335" width="24" height="15" fill="#35586F"/>
<rect x="962.5" y="362.5" width="8" height="8" fill="#FAFAFA" stroke="#9A9A9A" stroke-width="1"/><rect x="964" y="366" width="5" height="1" fill="#000"/><rect x="966" y="364" width="1" height="5" fill="#000"/>
<path d="M983 356.3 H992.5 L993.5 359 H983 Z" fill="#7397B8"/><rect x="982" y="359" width="11" height="2" fill="#7A90A5"/><rect x="993" y="359" width="13" height="2" fill="#9BA4AE"/><rect x="982" y="361" width="24" height="15" fill="#35586F"/>
<rect x="936.5" y="388.5" width="8" height="8" fill="#FAFAFA" stroke="#9A9A9A" stroke-width="1"/><rect x="938" y="392" width="5" height="1" fill="#000"/><rect x="940" y="390" width="1" height="5" fill="#000"/>
<path d="M957 382.3 H966.5 L967.5 385 H957 Z" fill="#7397B8"/><rect x="956" y="385" width="11" height="2" fill="#7A90A5"/><rect x="967" y="385" width="13" height="2" fill="#9BA4AE"/><rect x="956" y="387" width="24" height="15" fill="#35586F"/>
</svg>
<div class="tr" style="left:127.3px;top:-6.459999999999994px">1000 Ticket</div>
<div class="tr" style="left:153.3px;top:19.539999999999992px">1001 Tickets (base)</div>
<div class="tr" style="left:127.3px;top:45.53999999999999px">1100 Status</div>
<div class="tr" style="left:153.3px;top:71.53999999999999px">1101 Status type</div>
<div class="tr" style="left:153.3px;top:97.53999999999999px">1102 Status (base)</div>
<div class="tr" style="left:127.3px;top:123.54000000000002px">1200 Comment</div>
<div class="tr" style="left:153.3px;top:149.54000000000002px">1201 Comment type</div>
<div class="tr" style="left:153.3px;top:175.54000000000002px">1202 Comment (base)</div>
<div class="tr" style="left:127.3px;top:201.54000000000002px">1300 Customer</div>
<div class="tr" style="left:127.3px;top:227.54000000000002px">1400 User</div>
<div class="tr" style="left:86.3px;top:253.54000000000002px">3.Workspaces</div>
</div>
<div class="a" style="left:1282px;top:133px;width:1px;height:272px;background:#fff"></div>
<div class="a" style="left:1283px;top:133px;width:15px;height:272px;background:#F0F0F0"></div>
<div class="a" style="left:1283px;top:212px;width:15px;height:176px;background:#CDCDCD"></div>
<svg class="a" style="left:1286px;top:139px" width="9" height="8" viewBox="0 0 9 8"><path d="M1 6.5 L4.5 2.5 L8 6.5" fill="none" stroke="#606060" stroke-width="2"/></svg>
<svg class="a" style="left:1286px;top:393px" width="9" height="8" viewBox="0 0 9 8"><path d="M1 1.5 L4.5 5.5 L8 1.5" fill="none" stroke="#606060" stroke-width="2"/></svg>
<div class="a" style="left:903px;top:405px;width:394px;height:4px;background:#CCCEDB"></div>
<div class="t" style="left:908px;top:413.2px;font-size:11.5px">Properties</div>
<svg class="a" style="left:0;top:0" width="1300" height="751" viewBox="0 0 1300 751">
<g fill="#A8A8B0"><rect x="967" y="414" width="1" height="1"/><rect x="967" y="418" width="1" height="1"/><rect x="969" y="416" width="1" height="1"/><rect x="971" y="414" width="1" height="1"/><rect x="971" y="418" width="1" height="1"/><rect x="973" y="416" width="1" height="1"/><rect x="975" y="414" width="1" height="1"/><rect x="975" y="418" width="1" height="1"/><rect x="977" y="416" width="1" height="1"/><rect x="979" y="414" width="1" height="1"/><rect x="979" y="418" width="1" height="1"/><rect x="981" y="416" width="1" height="1"/><rect x="983" y="414" width="1" height="1"/><rect x="983" y="418" width="1" height="1"/><rect x="985" y="416" width="1" height="1"/><rect x="987" y="414" width="1" height="1"/><rect x="987" y="418" width="1" height="1"/><rect x="989" y="416" width="1" height="1"/><rect x="991" y="414" width="1" height="1"/><rect x="991" y="418" width="1" height="1"/><rect x="993" y="416" width="1" height="1"/><rect x="995" y="414" width="1" height="1"/><rect x="995" y="418" width="1" height="1"/><rect x="997" y="416" width="1" height="1"/><rect x="999" y="414" width="1" height="1"/><rect x="999" y="418" width="1" height="1"/><rect x="1001" y="416" width="1" height="1"/><rect x="1003" y="414" width="1" height="1"/><rect x="1003" y="418" width="1" height="1"/><rect x="1005" y="416" width="1" height="1"/><rect x="1007" y="414" width="1" height="1"/><rect x="1007" y="418" width="1" height="1"/><rect x="1009" y="416" width="1" height="1"/><rect x="1011" y="414" width="1" height="1"/><rect x="1011" y="418" width="1" height="1"/><rect x="1013" y="416" width="1" height="1"/><rect x="1015" y="414" width="1" height="1"/><rect x="1015" y="418" width="1" height="1"/><rect x="1017" y="416" width="1" height="1"/><rect x="1019" y="414" width="1" height="1"/><rect x="1019" y="418" width="1" height="1"/><rect x="1021" y="416" width="1" height="1"/><rect x="1023" y="414" width="1" height="1"/><rect x="1023" y="418" width="1" height="1"/><rect x="1025" y="416" width="1" height="1"/><rect x="1027" y="414" width="1" height="1"/><rect x="1027" y="418" width="1" height="1"/><rect x="1029" y="416" width="1" height="1"/><rect x="1031" y="414" width="1" height="1"/><rect x="1031" y="418" width="1" height="1"/><rect x="1033" y="416" width="1" height="1"/><rect x="1035" y="414" width="1" height="1"/><rect x="1035" y="418" width="1" height="1"/><rect x="1037" y="416" width="1" height="1"/><rect x="1039" y="414" width="1" height="1"/><rect x="1039" y="418" width="1" height="1"/><rect x="1041" y="416" width="1" height="1"/><rect x="1043" y="414" width="1" height="1"/><rect x="1043" y="418" width="1" height="1"/><rect x="1045" y="416" width="1" height="1"/><rect x="1047" y="414" width="1" height="1"/><rect x="1047" y="418" width="1" height="1"/><rect x="1049" y="416" width="1" height="1"/><rect x="1051" y="414" width="1" height="1"/><rect x="1051" y="418" width="1" height="1"/><rect x="1053" y="416" width="1" height="1"/><rect x="1055" y="414" width="1" height="1"/><rect x="1055" y="418" width="1" height="1"/><rect x="1057" y="416" width="1" height="1"/><rect x="1059" y="414" width="1" height="1"/><rect x="1059" y="418" width="1" height="1"/><rect x="1061" y="416" width="1" height="1"/><rect x="1063" y="414" width="1" height="1"/><rect x="1063" y="418" width="1" height="1"/><rect x="1065" y="416" width="1" height="1"/><rect x="1067" y="414" width="1" height="1"/><rect x="1067" y="418" width="1" height="1"/><rect x="1069" y="416" width="1" height="1"/><rect x="1071" y="414" width="1" height="1"/><rect x="1071" y="418" width="1" height="1"/><rect x="1073" y="416" width="1" height="1"/><rect x="1075" y="414" width="1" height="1"/><rect x="1075" y="418" width="1" height="1"/><rect x="1077" y="416" width="1" height="1"/><rect x="1079" y="414" width="1" height="1"/><rect x="1079" y="418" width="1" height="1"/><rect x="1081" y="416" width="1" height="1"/><rect x="1083" y="414" width="1" height="1"/><rect x="1083" y="418" width="1" height="1"/><rect x="1085" y="416" width="1" height="1"/><rect x="1087" y="414" width="1" height="1"/><rect x="1087" y="418" width="1" height="1"/><rect x="1089" y="416" width="1" height="1"/><rect x="1091" y="414" width="1" height="1"/><rect x="1091" y="418" width="1" height="1"/><rect x="1093" y="416" width="1" height="1"/><rect x="1095" y="414" width="1" height="1"/><rect x="1095" y="418" width="1" height="1"/><rect x="1097" y="416" width="1" height="1"/><rect x="1099" y="414" width="1" height="1"/><rect x="1099" y="418" width="1" height="1"/><rect x="1101" y="416" width="1" height="1"/><rect x="1103" y="414" width="1" height="1"/><rect x="1103" y="418" width="1" height="1"/><rect x="1105" y="416" width="1" height="1"/><rect x="1107" y="414" width="1" height="1"/><rect x="1107" y="418" width="1" height="1"/><rect x="1109" y="416" width="1" height="1"/><rect x="1111" y="414" width="1" height="1"/><rect x="1111" y="418" width="1" height="1"/><rect x="1113" y="416" width="1" height="1"/><rect x="1115" y="414" width="1" height="1"/><rect x="1115" y="418" width="1" height="1"/><rect x="1117" y="416" width="1" height="1"/><rect x="1119" y="414" width="1" height="1"/><rect x="1119" y="418" width="1" height="1"/><rect x="1121" y="416" width="1" height="1"/><rect x="1123" y="414" width="1" height="1"/><rect x="1123" y="418" width="1" height="1"/><rect x="1125" y="416" width="1" height="1"/><rect x="1127" y="414" width="1" height="1"/><rect x="1127" y="418" width="1" height="1"/><rect x="1129" y="416" width="1" height="1"/><rect x="1131" y="414" width="1" height="1"/><rect x="1131" y="418" width="1" height="1"/><rect x="1133" y="416" width="1" height="1"/><rect x="1135" y="414" width="1" height="1"/><rect x="1135" y="418" width="1" height="1"/><rect x="1137" y="416" width="1" height="1"/><rect x="1139" y="414" width="1" height="1"/><rect x="1139" y="418" width="1" height="1"/><rect x="1141" y="416" width="1" height="1"/><rect x="1143" y="414" width="1" height="1"/><rect x="1143" y="418" width="1" height="1"/><rect x="1145" y="416" width="1" height="1"/><rect x="1147" y="414" width="1" height="1"/><rect x="1147" y="418" width="1" height="1"/><rect x="1149" y="416" width="1" height="1"/><rect x="1151" y="414" width="1" height="1"/><rect x="1151" y="418" width="1" height="1"/><rect x="1153" y="416" width="1" height="1"/><rect x="1155" y="414" width="1" height="1"/><rect x="1155" y="418" width="1" height="1"/><rect x="1157" y="416" width="1" height="1"/><rect x="1159" y="414" width="1" height="1"/><rect x="1159" y="418" width="1" height="1"/><rect x="1161" y="416" width="1" height="1"/><rect x="1163" y="414" width="1" height="1"/><rect x="1163" y="418" width="1" height="1"/><rect x="1165" y="416" width="1" height="1"/><rect x="1167" y="414" width="1" height="1"/><rect x="1167" y="418" width="1" height="1"/><rect x="1169" y="416" width="1" height="1"/><rect x="1171" y="414" width="1" height="1"/><rect x="1171" y="418" width="1" height="1"/><rect x="1173" y="416" width="1" height="1"/><rect x="1175" y="414" width="1" height="1"/><rect x="1175" y="418" width="1" height="1"/><rect x="1177" y="416" width="1" height="1"/><rect x="1179" y="414" width="1" height="1"/><rect x="1179" y="418" width="1" height="1"/><rect x="1181" y="416" width="1" height="1"/><rect x="1183" y="414" width="1" height="1"/><rect x="1183" y="418" width="1" height="1"/><rect x="1185" y="416" width="1" height="1"/><rect x="1187" y="414" width="1" height="1"/><rect x="1187" y="418" width="1" height="1"/><rect x="1189" y="416" width="1" height="1"/><rect x="1191" y="414" width="1" height="1"/><rect x="1191" y="418" width="1" height="1"/><rect x="1193" y="416" width="1" height="1"/><rect x="1195" y="414" width="1" height="1"/><rect x="1195" y="418" width="1" height="1"/><rect x="1197" y="416" width="1" height="1"/><rect x="1199" y="414" width="1" height="1"/><rect x="1199" y="418" width="1" height="1"/><rect x="1201" y="416" width="1" height="1"/><rect x="1203" y="414" width="1" height="1"/><rect x="1203" y="418" width="1" height="1"/><rect x="1205" y="416" width="1" height="1"/><rect x="1207" y="414" width="1" height="1"/><rect x="1207" y="418" width="1" height="1"/><rect x="1209" y="416" width="1" height="1"/><rect x="1211" y="414" width="1" height="1"/><rect x="1211" y="418" width="1" height="1"/><rect x="1213" y="416" width="1" height="1"/><rect x="1215" y="414" width="1" height="1"/><rect x="1215" y="418" width="1" height="1"/><rect x="1217" y="416" width="1" height="1"/><rect x="1219" y="414" width="1" height="1"/><rect x="1219" y="418" width="1" height="1"/><rect x="1221" y="416" width="1" height="1"/><rect x="1223" y="414" width="1" height="1"/><rect x="1223" y="418" width="1" height="1"/><rect x="1225" y="416" width="1" height="1"/><rect x="1227" y="414" width="1" height="1"/><rect x="1227" y="418" width="1" height="1"/><rect x="1229" y="416" width="1" height="1"/><rect x="1231" y="414" width="1" height="1"/><rect x="1231" y="418" width="1" height="1"/><rect x="1233" y="416" width="1" height="1"/><rect x="1235" y="414" width="1" height="1"/><rect x="1235" y="418" width="1" height="1"/><rect x="1237" y="416" width="1" height="1"/><rect x="1239" y="414" width="1" height="1"/><rect x="1239" y="418" width="1" height="1"/><rect x="1241" y="416" width="1" height="1"/><rect x="1243" y="414" width="1" height="1"/><rect x="1243" y="418" width="1" height="1"/><rect x="1245" y="416" width="1" height="1"/><rect x="1247" y="414" width="1" height="1"/><rect x="1247" y="418" width="1" height="1"/><rect x="1249" y="416" width="1" height="1"/><rect x="1251" y="414" width="1" height="1"/><rect x="1251" y="418" width="1" height="1"/><rect x="1253" y="416" width="1" height="1"/><rect x="1255" y="414" width="1" height="1"/><rect x="1255" y="418" width="1" height="1"/><rect x="1257" y="416" width="1" height="1"/></g>
<path d="M1266.5 414.5 H1270.5 V419.5 H1266.5 Z" fill="none" stroke="#000" stroke-width="1"/><rect x="1269" y="414.5" width="1.6" height="5" fill="#000"/><rect x="1265" y="419" width="7.5" height="1.2" fill="#000"/><rect x="1268.2" y="420" width="1" height="3" fill="#000"/>
<path d="M1280.8 415.6 L1287.6 421.2 M1287.6 415.6 L1280.8 421.2" stroke="#000" stroke-width="1.7"/>
<rect x="903.5" y="431.5" width="25" height="25" fill="#F2F2F6" stroke="#3399FF"/>
<rect x="906.3" y="434.2" width="7.8" height="8" fill="#35586F"/><rect x="906.3" y="445" width="7.8" height="8" fill="#35586F"/><rect x="909.6" y="442" width="1.2" height="3" fill="#35586F"/>
<path d="M910.2 435.8 L912.2 438.2 L910.2 440.6 L908.2 438.2 Z" fill="#3AAA7A"/><path d="M910.2 446.6 L912.2 449 L910.2 451.4 L908.2 449 Z" fill="#1E9BD7"/>
<rect x="916" y="435" width="9" height="1.3" fill="#3AAA7A"/><rect x="916" y="437.6" width="7" height="1.3" fill="#9FBFAF"/><rect x="916" y="440.2" width="7" height="1.3" fill="#6DB894"/>
<rect x="916" y="446" width="9" height="1.3" fill="#1E9BD7"/><rect x="916" y="448.6" width="7" height="1.3" fill="#6FB6DD"/><rect x="916" y="451.2" width="7" height="1.3" fill="#9CC0D6"/>
<rect x="931" y="433" width="1" height="24" fill="#CCCEDB"/>
<rect x="938" y="434.5" width="19" height="1.8" fill="#35586F"/>
<rect x="938" y="439.3" width="8" height="1.5" fill="#A3BFB0"/><rect x="938" y="442" width="8" height="1.3" fill="#3AAA7A"/><rect x="938" y="444.5" width="8" height="1.5" fill="#A3BFB0"/><rect x="938" y="448.3" width="8" height="1.5" fill="#9CC0D6"/><rect x="938" y="451" width="8" height="1.3" fill="#1E9BD7"/>
<rect x="949" y="439.3" width="8" height="1.5" fill="#A3BFB0"/><rect x="949" y="442" width="8" height="1.3" fill="#3AAA7A"/><rect x="949" y="444.5" width="8" height="1.5" fill="#A3BFB0"/><rect x="949" y="448.3" width="8" height="1.5" fill="#9CC0D6"/><rect x="949" y="451" width="8" height="1.3" fill="#1E9BD7"/>
<rect x="963" y="433" width="1" height="24" fill="#CCCEDB"/>
<path d="M971.5 442 L974.5 434.3 L977.5 442 M972.6 439.5 H976.4" fill="none" stroke="#3AAA7A" stroke-width="1.6"/>
<path d="M971.5 444.8 H977 L971.8 452 H977.4" fill="none" stroke="#E84038" stroke-width="1.7"/>
<rect x="983.2" y="434.5" width="1.7" height="1.7" fill="#35586F"/><rect x="983.2" y="437.6" width="1.7" height="14" fill="#35586F"/><path d="M980.5 448 L984 452 L987.5 448" fill="none" stroke="#35586F" stroke-width="1.7"/>
<rect x="995" y="433" width="1" height="24" fill="#CCCEDB"/>
<rect x="999.5" y="433.5" width="149" height="21" fill="none" stroke="#C6C6C6" stroke-width="1.3"/>
<path d="M1138 443.3 h7 l-3.5 3.7 z" fill="#C2C2C2"/>
</svg>
<div class="t" style="left:1002.4px;top:438.1px;color:#717171">Label</div>
<div class="a" style="left:899px;top:460px;width:383px;height:248px;overflow:hidden">
<svg class="a" style="left:-899px;top:-460px" width="1300" height="751" viewBox="0 0 1300 751">
<rect x="904.5" y="465.5" width="8" height="8" fill="#EEEEF2" stroke="#1E1E1E" stroke-width="1"/><rect x="906" y="469" width="5" height="1" fill="#000"/><rect x="908" y="467" width="1" height="5" fill="#000"/>
<rect x="904.5" y="484.5" width="8" height="8" fill="#EEEEF2" stroke="#1E1E1E" stroke-width="1"/><rect x="906" y="488" width="5" height="1" fill="#000"/>
<rect x="916" y="498" width="185" height="18" fill="#F5F5F5"/><rect x="1102" y="498" width="179" height="18" fill="#F5F5F5"/>
<rect x="916" y="517" width="185" height="18" fill="#EAEAEE"/><rect x="1102" y="517" width="179" height="18" fill="#F5F5F5"/>
<rect x="1264.5" y="517.5" width="16" height="17" fill="#F5F5F5" stroke="#D0D4E4"/>
<rect x="1268" y="529" width="2" height="2" fill="#000"/><rect x="1271.5" y="529" width="2" height="2" fill="#000"/><rect x="1275" y="529" width="2" height="2" fill="#000"/>
<rect x="916" y="536" width="185" height="18" fill="#F5F5F5"/><rect x="1102" y="536" width="179" height="18" fill="#F5F5F5"/>
<rect x="916" y="555" width="185" height="18" fill="#F5F5F5"/><rect x="1102" y="555" width="179" height="18" fill="#F5F5F5"/>
<rect x="916" y="574" width="185" height="18" fill="#F5F5F5"/><rect x="1102" y="574" width="179" height="18" fill="#F5F5F5"/>
<rect x="1104.5" y="576.5" width="18" height="13" fill="#fff" stroke="#000" stroke-width="1"/>
<rect x="916" y="593" width="185" height="18" fill="#F5F5F5"/><rect x="1102" y="593" width="179" height="18" fill="#F5F5F5"/>
<rect x="916" y="612" width="185" height="18" fill="#F5F5F5"/><rect x="1102" y="612" width="179" height="18" fill="#F5F5F5"/>
<rect x="1104.5" y="614.5" width="18" height="13" fill="#000" stroke="#000" stroke-width="1"/>
<rect x="916" y="631" width="185" height="18" fill="#F5F5F5"/><rect x="1102" y="631" width="179" height="18" fill="#F5F5F5"/>
<rect x="904.5" y="655.5" width="8" height="8" fill="#EEEEF2" stroke="#1E1E1E" stroke-width="1"/><rect x="906" y="659" width="5" height="1" fill="#000"/>
<rect x="916" y="669" width="185" height="18" fill="#F5F5F5"/><rect x="1102" y="669" width="179" height="18" fill="#F5F5F5"/>
<rect x="916" y="688" width="185" height="18" fill="#F5F5F5"/><rect x="1102" y="688" width="179" height="18" fill="#F5F5F5"/>
<rect x="916" y="707" width="185" height="18" fill="#F5F5F5"/><rect x="1102" y="707" width="179" height="18" fill="#F5F5F5"/>
</svg>
<div class="t" style="left:20.299999999999955px;top:3.4px;font-size:12px;font-weight:bold;letter-spacing:-0.1px">Object</div>
<div class="t" style="left:20.299999999999955px;top:22.4px;font-size:12px;font-weight:bold;letter-spacing:-0.1px">Format</div>
<div class="t" style="left:20px;top:41.05px;font-size:12px;transform:scaleX(0.95);transform-origin:0 0">Name</div>
<div class="t" style="left:205.7px;top:41.05px;font-size:12px;transform:scaleX(0.95);transform-origin:0 0">Label</div>
<div class="t" style="left:20px;top:60.05px;font-size:12px;transform:scaleX(0.95);transform-origin:0 0">Caption</div>
<div class="t" style="left:205.7px;top:60.05px;font-size:12px;transform:scaleX(0.95);transform-origin:0 0">Ticket №</div>
<div class="t" style="left:20px;top:79.05px;font-size:12px;transform:scaleX(0.95);transform-origin:0 0">Visible</div>
<div class="t" style="left:205.7px;top:79.05px;font-size:12px;transform:scaleX(0.95);transform-origin:0 0">1-Yes</div>
<div class="t" style="left:20px;top:98.05px;font-size:12px;transform:scaleX(0.95);transform-origin:0 0">Back Style</div>
<div class="t" style="left:205.7px;top:98.05px;font-size:12px;transform:scaleX(0.95);transform-origin:0 0">0-Transparent</div>
<div class="t" style="left:20px;top:117.05px;font-size:12px;transform:scaleX(0.95);transform-origin:0 0">Back Color</div>
<div class="t" style="left:231.5999999999999px;top:117.05px;font-size:12px;transform:scaleX(0.95);transform-origin:0 0">16777215</div>
<div class="t" style="left:20px;top:136.05px;font-size:12px;transform:scaleX(0.95);transform-origin:0 0">Special Effect</div>
<div class="t" style="left:205.7px;top:136.05px;font-size:12px;transform:scaleX(0.95);transform-origin:0 0">0-Flat</div>
<div class="t" style="left:20px;top:155.05px;font-size:12px;transform:scaleX(0.95);transform-origin:0 0">Fore Color</div>
<div class="t" style="left:231.5999999999999px;top:155.05px;font-size:12px;transform:scaleX(0.95);transform-origin:0 0">0</div>
<div class="t" style="left:20px;top:174.05px;font-size:12px;transform:scaleX(0.95);transform-origin:0 0">Text Align</div>
<div class="t" style="left:205.7px;top:174.05px;font-size:12px;transform:scaleX(0.95);transform-origin:0 0">0-Left</div>
<div class="t" style="left:20.299999999999955px;top:193.4px;font-size:12px;font-weight:bold;letter-spacing:-0.1px">Position &amp; Size</div>
<div class="t" style="left:20px;top:212.05px;font-size:12px;transform:scaleX(0.95);transform-origin:0 0">Left</div>
<div class="t" style="left:205.7px;top:212.05px;font-size:12px;transform:scaleX(0.95);transform-origin:0 0">0,4см (253)</div>
<div class="t" style="left:20px;top:231.05px;font-size:12px;transform:scaleX(0.95);transform-origin:0 0">Top</div>
<div class="t" style="left:205.7px;top:231.05px;font-size:12px;transform:scaleX(0.95);transform-origin:0 0">0,4см (214)</div>
<div class="t" style="left:20px;top:250.05px;font-size:12px;transform:scaleX(0.95);transform-origin:0 0">Width</div>
</div>
<div class="a" style="left:1281px;top:460px;width:1px;height:248px;background:#fff"></div>
<div class="a" style="left:1282px;top:460px;width:15px;height:248px;background:#F0F0F0"></div>
<div class="a" style="left:1282px;top:477px;width:15px;height:111px;background:#CDCDCD"></div>
<svg class="a" style="left:1285px;top:465px" width="9" height="8" viewBox="0 0 9 8"><path d="M1 6.5 L4.5 2.5 L8 6.5" fill="none" stroke="#606060" stroke-width="2"/></svg>
<svg class="a" style="left:1285px;top:696px" width="9" height="8" viewBox="0 0 9 8"><path d="M1 1.5 L4.5 5.5 L8 1.5" fill="none" stroke="#606060" stroke-width="2"/></svg>
<div class="a" style="left:901px;top:711px;width:396px;height:19px;background:#F7F7F7;border-top:1px solid #E6E6EA"></div>
<div class="a" style="left:899px;top:708px;width:398px;height:19px;overflow:hidden"><div class="t" style="left:8.3px;top:9.8px;font-size:11px;font-weight:bold">Caption</div></div>
<!--/RP-->
<!--NAV-->
<div class="t" style="left:13.3px;top:709.6px;font-size:11.2px">Record:</div>
<svg class="a" style="left:0;top:0" width="900" height="751" viewBox="0 0 900 751">
<rect x="65" y="704" width="1" height="23" fill="#CCCEDB"/>
<rect x="74" y="707" width="5" height="15.5" fill="#8C8C8C"/><path d="M79.5 714.75 L90 707 V722.5 Z" fill="#8C8C8C"/>
<path d="M102.5 714.75 L113 707 V722.5 Z" fill="#8C8C8C"/>
<rect x="123.5" y="706.5" width="45" height="17" rx="1" fill="#E8E8EA" stroke="#6E6E6E" stroke-width="1"/>
<path d="M189.3 714.75 L179 707 V722.5 Z" fill="#8C8C8C"/>
<path d="M212.5 714.75 L202 707 V722.5 Z" fill="#8C8C8C"/><rect x="213" y="707" width="5" height="15.5" fill="#8C8C8C"/>
<rect x="423.5" y="703.5" width="232" height="23" fill="#F5F5F5" stroke="#D5D7E2"/>
<path d="M517.5 725 L523 730" stroke="none"/>
<path d="M517.3 714.8 L522.8 720.3 L533.6 709.4" fill="none" stroke="#A9A9A9" stroke-width="1.8"/>
<rect x="658" y="704" width="1" height="23" fill="#CCCEDB"/>
<rect x="662.5" y="703.5" width="232" height="23" fill="#F5F5F5" stroke="#D5D7E2"/>
<rect x="757" y="713.8" width="18" height="2" fill="#A5A5A5"/><rect x="765" y="706" width="2" height="17.6" fill="#A5A5A5"/>
</svg>
<div class="t" style="left:157px;top:708.8px;color:#6A6A8A;font-size:11.5px">1</div>
<div class="t" style="left:311px;top:709.6px;color:#A0A0A0;font-size:11.5px;word-spacing:2px">of 1</div>
<div class="t" style="left:539px;top:709.6px;color:#6D6D7D;font-size:11.5px">Save</div>
<div class="t" style="left:779px;top:709.6px;color:#6D6D7D;font-size:11.5px">Add</div>
<!--/NAV-->
<!-- status bar -->
<div class="a" style="left:0;top:730px;width:1300px;height:21px;background:#007ACC"></div>
<div class="t" style="left:4.5px;top:734.8px;color:#fff">Main window</div>
<div class="t" style="left:1123.5px;top:735.3px;color:#fff;font-size:11px">5.4.8.24</div>
<svg class="a" style="left:1284px;top:738px" width="12" height="12" viewBox="0 0 12 12"><g fill="#9FC9EA"><rect x="9" y="1" width="1.2" height="1.2"/><rect x="9" y="4" width="1.2" height="1.2"/><rect x="6" y="4" width="1.2" height="1.2"/><rect x="9" y="7" width="1.2" height="1.2"/><rect x="6" y="7" width="1.2" height="1.2"/><rect x="3" y="7" width="1.2" height="1.2"/><rect x="9" y="10" width="1.2" height="1.2"/><rect x="6" y="10" width="1.2" height="1.2"/><rect x="3" y="10" width="1.2" height="1.2"/><rect x="0" y="10" width="1.2" height="1.2"/></g></svg>

</body></html>
